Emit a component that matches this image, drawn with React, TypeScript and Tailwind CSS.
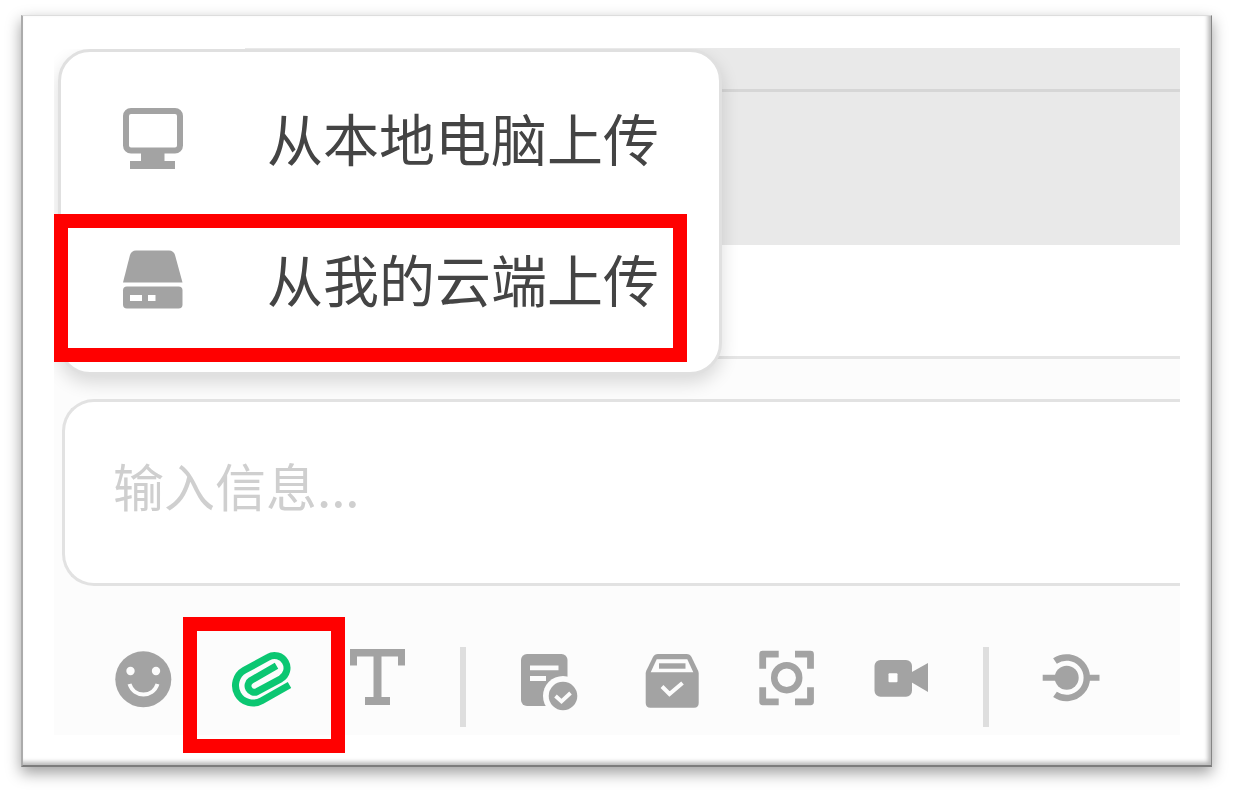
import type { ReactNode } from 'react';

function Icon({ children, className = '' }: { children: ReactNode; className?: string }) {
  return (
    <svg viewBox="0 0 64 64" aria-hidden="true" fill="none" className={`size-16 shrink-0 overflow-visible ${className}`}>
      {children}
    </svg>
  );
}

const MonitorIcon = () => (
  <Icon>
    <rect x="5" y="2" width="54" height="39.5" rx="5" stroke="currentColor" strokeWidth="6" />
    <path d="M20 43h23.5v9H54v8H9v-8h11z" fill="currentColor" />
  </Icon>
);

const DriveIcon = () => (
  <Icon>
    <path d="M15 .5h33q4.500 0 6 4.500L61.500 32.500H2L9 5Q10.500.5 15 .5z" fill="currentColor" />
    <rect x="2" y="36.500" width="59.500" height="22" rx="4" fill="currentColor" />
    <path d="M9 45h12v6H9zM27 45h7.500v6H27z" fill="white" />
  </Icon>
);

const SmileIcon = () => (
  <Icon>
    <circle cx="32.300" cy="32.300" r="28" fill="currentColor" />
    <circle cx="19.500" cy="24" r="4.200" fill="#fcfcfc" />
    <circle cx="45" cy="24" r="4.200" fill="#fcfcfc" />
    <path d="M18.500 37C23 51 42 51 46.500 37" stroke="#fcfcfc" strokeWidth="4" />
  </Icon>
);

const ClipIcon = () => (
  <Icon>
    <path
      d="M61.500 38L33.700 53.700A17.500 17.500 0 0 1 16.300 23.300L40.200 10.200A12.500 12.500 0 0 1 52.800 31.800L29 44.700A6.400 6.400 0 0 1 22.900 33.500L48.500 18.800"
      stroke="currentColor"
      strokeWidth="7"
      strokeLinejoin="round"
    />
  </Icon>
);

const TypeIcon = () => (
  <Icon>
    <path d="M5 2h55v16.500h-7V9.500H36.500V50H45v8H20v-8h8.500V9.500H12v9H5z" fill="currentColor" />
  </Icon>
);

const NoteCheckIcon = () => (
  <Icon>
    <rect x="4" y="7" width="46.500" height="52" rx="6" fill="currentColor" />
    <path d="M13 18.500h28.500v4.800H13zM13 29h16v5H13z" fill="#fcfcfc" />
    <circle cx="46" cy="49" r="20" fill="#fcfcfc" />
    <circle cx="46" cy="49" r="14.300" fill="currentColor" />
    <path d="M38.500 49l6 5.500 9-8.500" stroke="#fcfcfc" strokeWidth="3.800" />
  </Icon>
);

const BoxCheckIcon = () => (
  <Icon>
    <path
      d="M24 7h28.500q3.500 0 5 3L64 23.500q.7 1.500.7 3V56q0 4.700-4.700 4.700H16.500q-4.800 0-4.800-4.700V26.500q0-1.500.7-3L19 10q1.500-3 5-3z"
      fill="currentColor"
    />
    <path d="M22.700 12.300h30.600l6 13H16.700z" fill="#fcfcfc" />
    <rect x="25" y="16.300" width="26.500" height="5.400" fill="currentColor" />
    <path d="M28 39.500l7.500 7.500L48.500 36" stroke="#fcfcfc" strokeWidth="4" />
  </Icon>
);

const CaptureIcon = () => (
  <Icon>
    <path
      d="M11.700 21.700V7.200h16M44 7.200h15.500v14.500M59.500 40.300v14.500H44M27.700 54.800h-16V40.300"
      stroke="currentColor"
      strokeWidth="6.800"
      strokeLinejoin="round"
    />
    <circle cx="35.700" cy="30.700" r="12.500" stroke="currentColor" strokeWidth="6.500" />
  </Icon>
);

const VideoIcon = () => (
  <Icon>
    <rect x="6.500" y="13" width="37.500" height="36.700" rx="6" fill="currentColor" />
    <path d="M43 25.500l17-9.500v29l-17-10z" fill="currentColor" />
    <rect x="20.500" y="26.300" width="9" height="9" rx="1" fill="white" />
  </Icon>
);

const PlugIcon = () => (
  <Icon>
    <circle cx="26.700" cy="30.700" r="12" fill="currentColor" />
    <path d="M2.700 30.700H20M47 30.700h12.500" stroke="currentColor" strokeWidth="6" />
    <path d="M15 14a20.300 20.300 0 1 1 0 33.400" stroke="currentColor" strokeWidth="6.500" />
  </Icon>
);

function ToolButton({ label, children, active = false }: { label: string; children: ReactNode; active?: boolean }) {
  return (
    <button type="button" aria-label={label} className={active ? 'relative text-[#0bc772]' : 'text-[#a3a3a3]'}>
      {children}
      {active && (
        <span className="pointer-events-none absolute -top-[30px] -left-[45px] h-[136px] w-[162px] border-[14px] border-[#ff0000]" />
      )}
    </button>
  );
}

const Divider = () => <span className="h-20 w-1.5 shrink-0 bg-[#dedede]" />;

function UploadItem({ icon, text }: { icon: ReactNode; text: string }) {
  return (
    <button type="button" role="menuitem" className="flex h-[141px] w-full items-center gap-[82px] px-[60px] text-[#a3a3a3]">
      {icon}
      <span className="pb-2 text-[56px] leading-[60px] font-normal whitespace-nowrap text-[#444444]">{text}</span>
    </button>
  );
}

export default function App() {
  return (
    <main className="min-h-screen bg-white pt-[15px] pr-[22px] pb-7 pl-[21px] font-['Noto_Sans_CJK_SC',sans-serif]">
      <div className="border-t border-r border-b-2 border-l-2 border-t-[#dddddd] border-r-[#858585] border-b-[#7c7c7c] border-l-[#ababab] bg-white px-[31px] pt-8 pb-[30px] shadow-[0_6px_14px_rgba(0,0,0,0.38),inset_-3px_-3px_4px_rgba(0,0,0,0.28)]">
        <div className="relative">
          <div className="ml-[191px] bg-[#e9e9e9] pb-[153px]">
            <div className="h-11 border-b-[3px] border-[#d6d6d6]" />
          </div>
          <div className="h-[114px] border-b-[3px] border-[#e5e5e5]" />

          <section className="bg-[#fcfcfc] pt-10">
            <div className="ml-2">
              <input
                type="text"
                aria-label="输入信息"
                placeholder="输入信息..."
                className="block h-[187px] w-full rounded-l-[32px] border-y-[3px] border-l-[3px] border-[#e2e2e2] bg-white px-12 pb-4 text-[51px] font-normal outline-none placeholder:text-[#cfcfcf]"
              />
            </div>
            <div className="flex items-start gap-[51px] pt-[61px] pb-2 pl-[57px]">
              <div className="flex gap-[53px]">
                <ToolButton label="表情"><SmileIcon /></ToolButton>
                <ToolButton label="附件" active><ClipIcon /></ToolButton>
                <ToolButton label="文字格式"><TypeIcon /></ToolButton>
              </div>
              <Divider />
              <div className="flex gap-[53px]">
                <ToolButton label="任务"><NoteCheckIcon /></ToolButton>
                <ToolButton label="收纳"><BoxCheckIcon /></ToolButton>
                <ToolButton label="截图"><CaptureIcon /></ToolButton>
                <ToolButton label="视频"><VideoIcon /></ToolButton>
              </div>
              <Divider />
              <ToolButton label="集成"><PlugIcon /></ToolButton>
            </div>
          </section>

          <div
            role="menu"
            className="absolute top-px left-1 w-[664px] rounded-[32px] border-[3px] border-[#e0e0e0] bg-white pt-[18px] pb-5 shadow-[0_8px_18px_rgba(0,0,0,0.14)] [clip-path:inset(0_-24px_-32px_-4px)]"
          >
            <UploadItem icon={<MonitorIcon />} text="从本地电脑上传" />
            <UploadItem icon={<DriveIcon />} text="从我的云端上传" />
          </div>
          <div className="pointer-events-none absolute top-[166px] left-0 h-[148px] w-[633px] border-[14px] border-[#ff0000]" />
        </div>
      </div>
    </main>
  );
}
